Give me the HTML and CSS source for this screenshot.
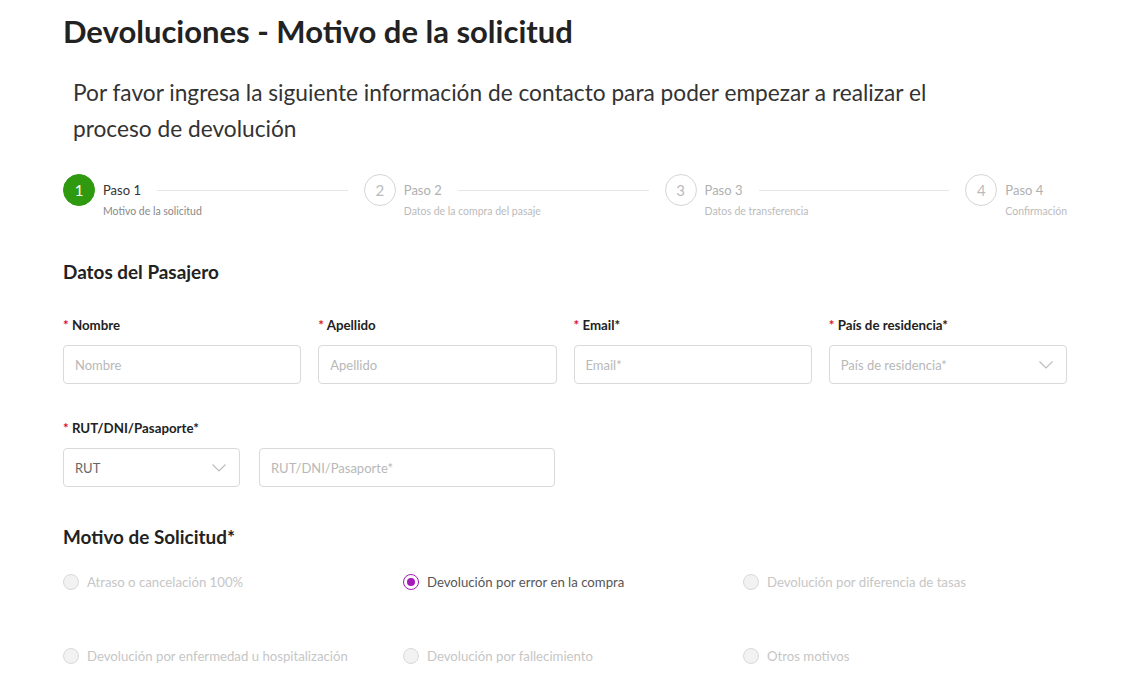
FILE: index.html
```html
<!DOCTYPE html>
<html lang="es">
<head>
<meta charset="utf-8">
<title>Devoluciones</title>
<link rel="stylesheet" href="styles.css">
</head>
<body>
<main class="page">
  <h1 class="title">Devoluciones - Motivo de la solicitud</h1>
  <p class="intro">Por favor ingresa la siguiente información de contacto para poder empezar a realizar el proceso de devolución</p>

  <ol class="steps">
    <li class="step active">
      <span class="circle">1</span>
      <div class="step-body">
        <div class="step-head"><span class="step-title">Paso 1</span><span class="tail"></span></div>
        <div class="step-desc">Motivo de la solicitud</div>
      </div>
    </li>
    <li class="step">
      <span class="circle">2</span>
      <div class="step-body">
        <div class="step-head"><span class="step-title">Paso 2</span><span class="tail"></span></div>
        <div class="step-desc">Datos de la compra del pasaje</div>
      </div>
    </li>
    <li class="step">
      <span class="circle">3</span>
      <div class="step-body">
        <div class="step-head"><span class="step-title">Paso 3</span><span class="tail"></span></div>
        <div class="step-desc">Datos de transferencia</div>
      </div>
    </li>
    <li class="step last">
      <span class="circle">4</span>
      <div class="step-body">
        <div class="step-head"><span class="step-title">Paso 4</span></div>
        <div class="step-desc">Confirmación</div>
      </div>
    </li>
  </ol>

  <h2 class="section">Datos del Pasajero</h2>

  <div class="grid4">
    <div class="field">
      <label class="label"><span class="req">*</span> Nombre</label>
      <div class="input placeholder">Nombre</div>
    </div>
    <div class="field">
      <label class="label"><span class="req">*</span> Apellido</label>
      <div class="input placeholder">Apellido</div>
    </div>
    <div class="field">
      <label class="label"><span class="req">*</span> Email*</label>
      <div class="input placeholder">Email*</div>
    </div>
    <div class="field">
      <label class="label"><span class="req">*</span> País de residencia*</label>
      <div class="input select placeholder">País de residencia*
        <svg class="chev" width="14" height="8" viewBox="0 0 14 8"><polyline points="0.5,0.5 7,7 13.5,0.5" fill="none" stroke="#bdbdbd" stroke-width="1.2"/></svg>
      </div>
    </div>
  </div>

  <div class="field doc">
    <label class="label"><span class="req">*</span> RUT/DNI/Pasaporte*</label>
    <div class="doc-row">
      <div class="input select rut">RUT
        <svg class="chev" width="14" height="8" viewBox="0 0 14 8"><polyline points="0.5,0.5 7,7 13.5,0.5" fill="none" stroke="#bdbdbd" stroke-width="1.2"/></svg>
      </div>
      <div class="input placeholder docnum">RUT/DNI/Pasaporte*</div>
    </div>
  </div>

  <h2 class="section motivo">Motivo de Solicitud*</h2>

  <div class="radios">
    <div class="radio disabled"><span class="dot"></span>Atraso o cancelación 100%</div>
    <div class="radio checked"><span class="dot"></span>Devolución por error en la compra</div>
    <div class="radio disabled"><span class="dot"></span>Devolución por diferencia de tasas</div>
    <div class="radio disabled"><span class="dot"></span>Devolución por enfermedad u hospitalización</div>
    <div class="radio disabled"><span class="dot"></span>Devolución por fallecimiento</div>
    <div class="radio disabled"><span class="dot"></span>Otros motivos</div>
  </div>
</main>
</body>
</html>
```

FILE: styles.css
```css
* { box-sizing: border-box; }

body {
  margin: 0;
  background: #fff;
  font-family: Lato, "Liberation Sans", Arial, sans-serif;
  color: #222;
}

.page {
  width: 1134px;
  padding: 12px 67px 0 63px;
}

.title {
  margin: 0;
  font-size: 31px;
  line-height: 38px;
  font-weight: 700;
  color: #222;
}

.intro {
  margin: 25px 0 0;
  padding-left: 10px;
  max-width: 880px;
  font-size: 22.7px;
  line-height: 36px;
  font-weight: 400;
  color: #333;
}

.steps {
  list-style: none;
  margin: 27px 0 0;
  padding: 0;
  display: flex;
}

.step {
  flex: 1 1 0;
  display: flex;
  align-items: flex-start;
  min-width: 0;
}

.step.last { flex: 0 0 auto; }

.circle {
  flex: 0 0 auto;
  width: 32px;
  height: 32px;
  border-radius: 50%;
  border: 1px solid #d6d6d6;
  color: #bbb;
  font-size: 15px;
  display: flex;
  align-items: center;
  justify-content: center;
  margin-right: 8px;
}

.step.active .circle {
  background: #2f9a10;
  border-color: #2f9a10;
  color: #fff;
}

.step-body { flex: 1; min-width: 0; }

.step-head {
  display: flex;
  align-items: center;
  height: 32px;
}

.step-title {
  font-size: 13px;
  color: #b0b0b0;
  white-space: nowrap;
}

.step.active .step-title { color: #333; }

.tail {
  flex: 1;
  height: 1px;
  background: #e6e6e6;
  margin: 0 16px;
}

.step-desc {
  margin-top: -2px;
  font-size: 10.5px;
  line-height: 14px;
  color: #bbb;
  white-space: nowrap;
}

.step.active .step-desc { color: #888; }

.section {
  margin: 42px 0 0;
  font-size: 18.9px;
  line-height: 24px;
  font-weight: 700;
  color: #222;
}

.grid4 {
  margin-top: 32px;
  display: grid;
  grid-template-columns: repeat(4, 1fr);
  column-gap: 17px;
}

.field { display: flex; flex-direction: column; }

.label {
  font-size: 13.3px;
  line-height: 18px;
  font-weight: 700;
  color: #222;
  margin-bottom: 11px;
}

.req { color: #e0102b; }

.input {
  height: 39px;
  border: 1px solid #d9d9d9;
  border-radius: 4px;
  padding: 0 11px;
  display: flex;
  align-items: center;
  font-size: 13px;
  color: #666;
}

.input.placeholder { color: #b8b8b8; }

.select { justify-content: space-between; }

.chev { flex: 0 0 auto; margin-right: 2px; }

.doc { margin-top: 35px; }

.doc-row {
  display: flex;
  gap: 19px;
}

.rut { width: 177px; }
.docnum { width: 296px; }

.motivo { margin-top: 38px; }

.radios {
  margin-top: 22px;
  display: grid;
  grid-template-columns: 340px 340px 1fr;
  row-gap: 52px;
}

.radio {
  display: flex;
  align-items: center;
  height: 22px;
  font-size: 13.2px;
  color: #c6c6c6;
}

.dot {
  width: 16px;
  height: 16px;
  border-radius: 50%;
  border: 1px solid #d9d9d9;
  background: #f2f2f2;
  margin-right: 8px;
  flex: 0 0 auto;
  position: relative;
}

.radio.checked { color: #555; }

.radio.checked .dot {
  background: #fff;
  border-color: #a31ab8;
}

.radio.checked .dot::after {
  content: "";
  position: absolute;
  left: 3px;
  top: 3px;
  width: 8px;
  height: 8px;
  border-radius: 50%;
  background: #a31ab8;
}
```
